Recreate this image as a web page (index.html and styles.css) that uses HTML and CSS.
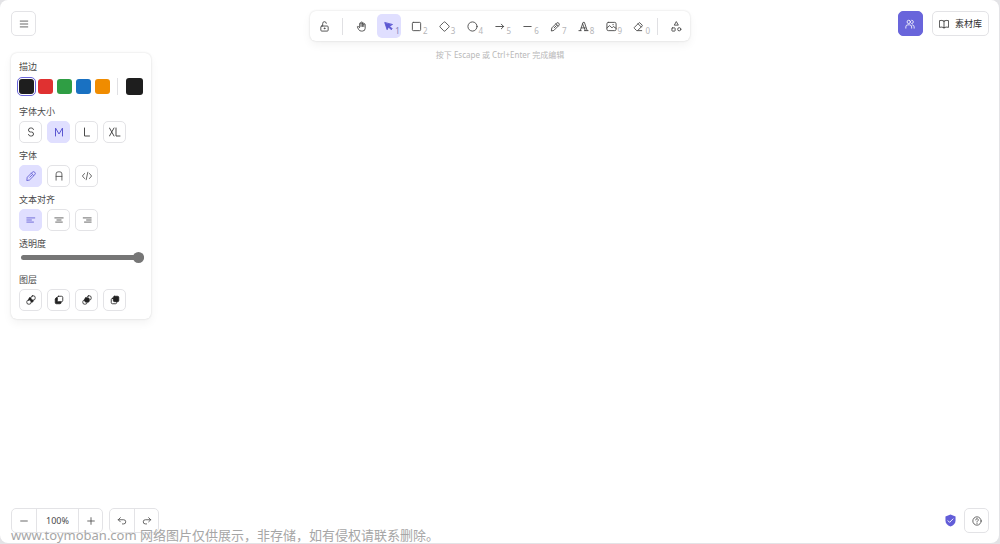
FILE: index.html
```html
<!DOCTYPE html>
<html lang="zh-CN">
<head>
<meta charset="utf-8">
<title>白板</title>
<link rel="stylesheet" href="styles.css">
</head>
<body>
<div class="app">
  <main class="board">
    <div class="side">
      <button class="btn square" aria-label="菜单"><svg class="ic" viewBox="0 0 24 24"><path d="M3 5h18M3 12h18M3 19h18"/></svg></button>
      <section class="panel">
        <h3 class="label">描边</h3>
        <div class="swatches">
          <button class="swatch black chosen" aria-label="黑色"></button>
          <button class="swatch red" aria-label="红色"></button>
          <button class="swatch green" aria-label="绿色"></button>
          <button class="swatch blue" aria-label="蓝色"></button>
          <button class="swatch orange" aria-label="橙色"></button>
          <span class="rule"></span>
          <button class="swatch current black" aria-label="当前颜色"></button>
        </div>
        <h3 class="label">字体大小</h3>
        <div class="options">
          <button class="opt" aria-label="小"><svg class="ic big" viewBox="0 0 24 24"><path d="M17 7a4 4 0 0 0-4-3h-2a4 4 0 0 0 0 8h2a4 4 0 0 1 0 8h-2a4 4 0 0 1-4-3"/></svg></button>
          <button class="opt on" aria-label="中"><svg class="ic big" viewBox="0 0 24 24"><path d="M5 20V4l7 12 7-12v16"/></svg></button>
          <button class="opt" aria-label="大"><svg class="ic big" viewBox="0 0 24 24"><path d="M7 4v16h10"/></svg></button>
          <button class="opt" aria-label="特大"><svg class="ic big" viewBox="0 0 24 24"><path d="M1 4l9 16M10 4L1 20M14 4v16h8"/></svg></button>
        </div>
        <h3 class="label">字体</h3>
        <div class="options">
          <button class="opt on" aria-label="手写"><svg class="ic" viewBox="0 0 24 24"><path d="M2 22l1-7L15 3a4.200 4.200 0 0 1 6 6L9 21zM13 5l5 6M9 15l5-5"/></svg></button>
          <button class="opt" aria-label="普通"><svg class="ic" viewBox="0 0 24 24"><path d="M5 22V7q0-5 5-5h4q5 0 5 5v15M5 13h14"/></svg></button>
          <button class="opt" aria-label="代码"><svg class="ic" viewBox="0 0 24 24"><path d="M6 6l-5 6 5 6M18 6l5 6-5 6M14 3l-4 18"/></svg></button>
        </div>
        <h3 class="label">文本对齐</h3>
        <div class="options">
          <button class="opt on" aria-label="左对齐"><svg class="ic" viewBox="0 0 24 24"><path d="M2 7h19M2 12h11M2 17h16"/></svg></button>
          <button class="opt" aria-label="居中"><svg class="ic" viewBox="0 0 24 24"><path d="M2 7h20M7 12h10M4 17h16"/></svg></button>
          <button class="opt" aria-label="右对齐"><svg class="ic" viewBox="0 0 24 24"><path d="M3 7h19M11 12h11M6 17h16"/></svg></button>
        </div>
        <label class="label" for="opacity">透明度</label>
        <input class="slider" id="opacity" type="range" min="0" max="100" value="100">
        <h3 class="label">图层</h3>
        <div class="options">
          <button class="opt dark" aria-label="置于底层"><svg class="ic" viewBox="0 0 24 24"><rect class="solid" x="7" y="7" width="10" height="10" rx="2"/><rect class="paper" x="12" y="2" width="10" height="10" rx="4"/><rect class="paper" x="2" y="12" width="10" height="10" rx="4"/></svg></button>
          <button class="opt dark" aria-label="下移一层"><svg class="ic" viewBox="0 0 24 24"><rect class="solid" x="3" y="7" width="14" height="14" rx="3"/><rect class="paper" x="8" y="3" width="13" height="13" rx="3"/></svg></button>
          <button class="opt dark" aria-label="上移一层"><svg class="ic" viewBox="0 0 24 24"><rect class="paper" x="12" y="2" width="10" height="10" rx="4"/><rect class="paper" x="2" y="12" width="10" height="10" rx="4"/><rect class="solid" x="7" y="7" width="10" height="10" rx="2"/></svg></button>
          <button class="opt dark" aria-label="置于顶层"><svg class="ic" viewBox="0 0 24 24"><rect class="paper" x="3" y="8" width="13" height="13" rx="3"/><rect class="solid" x="8" y="3" width="13" height="13" rx="3"/></svg></button>
        </div>
      </section>
    </div>

    <div class="middle">
      <div class="toolbar">
        <button class="tool" aria-label="锁定"><svg class="ic tl" viewBox="0 0 24 24"><rect x="4" y="11" width="16" height="11" rx="2"/><path d="M8 11V6a4 4 0 0 1 8-1"/><circle class="solid" cx="12" cy="16" r="1"/></svg></button>
        <span class="rule tall"></span>
        <div class="tools">
          <button class="tool" aria-label="抓手"><svg class="ic tl" viewBox="0 0 24 24"><path d="M8 13V5.500a1.500 1.500 0 0 1 3 0V12M11 5.500v-2a1.500 1.500 0 0 1 3 0V12M14 5.500a1.500 1.500 0 0 1 3 0V12M17 7.500a1.500 1.500 0 0 1 3 0V16a6 6 0 0 1-6 6h-2c-3 0-4.500-1-6-3l-3-5.500c-.6-1.200.8-2.500 2-1.500L8 14.500"/></svg></button>
          <button class="tool on" aria-label="选择"><svg class="ic tl" viewBox="0 0 24 24"><path class="solid" d="M4 4l5 15 3-6 6 6 2-2-6-6 6-3z"/></svg><span class="key">1</span></button>
          <button class="tool" aria-label="矩形"><svg class="ic tl" viewBox="0 0 24 24"><rect x="3" y="3" width="18" height="18" rx="2"/></svg><span class="key">2</span></button>
          <button class="tool" aria-label="菱形"><svg class="ic tl" viewBox="0 0 24 24"><path d="M10.500 2.500q1.500-1.500 3 0l8 8q1.500 1.500 0 3l-8 8q-1.500 1.500-3 0l-8-8q-1.500-1.500 0-3z"/></svg><span class="key">3</span></button>
          <button class="tool" aria-label="椭圆"><svg class="ic tl" viewBox="0 0 24 24"><circle cx="12" cy="12" r="10"/></svg><span class="key">4</span></button>
          <button class="tool" aria-label="箭头"><svg class="ic tl" viewBox="0 0 24 24"><path d="M4 12h17M16 7l5 5-5 5"/></svg><span class="key">5</span></button>
          <button class="tool" aria-label="线条"><svg class="ic tl" viewBox="0 0 24 24"><path d="M4 12h16"/></svg><span class="key">6</span></button>
          <button class="tool" aria-label="自由书写"><svg class="ic tl" viewBox="0 0 24 24"><path d="M3 21l1-6L15 4a3.800 3.800 0 0 1 5 5L9 20zM13 6l5 5M9 15l5-5"/></svg><span class="key">7</span></button>
          <button class="tool" aria-label="文字"><svg class="ic tl" viewBox="0 0 24 24"><path d="M2 21h5M14 21h8M5 21L11 3h3l6 18M7 15h9M10 6l6 15"/></svg><span class="key">8</span></button>
          <button class="tool" aria-label="插入图像"><svg class="ic tl" viewBox="0 0 24 24"><rect x="2" y="3" width="20" height="18" rx="3"/><path d="M2 15l6-5 5 5 3-3 6 4M15 8h1"/></svg><span class="key">9</span></button>
          <button class="tool" aria-label="橡皮"><svg class="ic tl" viewBox="0 0 24 24"><path d="M19 21H8l-5-5q-1-1 0-2L13 4q1-1 2 0l5 5q1 1 0 2L11 20M18 13L11 6"/></svg><span class="key">0</span></button>
        </div>
        <span class="rule tall"></span>
        <button class="tool" aria-label="更多工具"><svg class="ic tl" viewBox="0 0 24 24"><path d="M12 2l4 7H8z"/><rect x="2" y="15" width="7" height="7" rx="1"/><circle cx="18" cy="18" r="3.500"/></svg></button>
      </div>
      <p class="hint">按下 Escape 或 Ctrl+Enter 完成编辑</p>
    </div>

    <div class="right">
      <button class="btn square share" aria-label="协作"><svg class="ic" viewBox="0 0 24 24"><circle cx="9" cy="7" r="4"/><path d="M2 22v-3a5 5 0 0 1 5-5h4a5 5 0 0 1 5 5v3M16 3a4 4 0 0 1 0 8M22 22v-3a5 5 0 0 0-4-5"/></svg></button>
      <button class="btn library"><svg class="ic" viewBox="0 0 24 24"><path d="M12 5v16M12 5Q7 2 1 4v16q6-2 11 1M12 5q5-3 11-1v16q-6-2-11 1"/></svg>素材库</button>
    </div>
  </main>

  <footer class="footer">
    <div class="group">
      <button class="cell" aria-label="缩小"><svg class="ic" viewBox="0 0 24 24"><path d="M4 12h16"/></svg></button>
      <button class="cell zoom">100%</button>
      <button class="cell" aria-label="放大"><svg class="ic" viewBox="0 0 24 24"><path d="M4 12h16M12 4v16"/></svg></button>
    </div>
    <div class="group">
      <button class="cell" aria-label="撤销"><svg class="ic" viewBox="0 0 24 24"><path d="M8 14L3 9l5-5M3 9h13a5 5 0 0 1 0 10h-3"/></svg></button>
      <button class="cell" aria-label="重做"><svg class="ic" viewBox="0 0 24 24"><path d="M16 14l5-5-5-5M21 9H8a5 5 0 0 0 0 10h3"/></svg></button>
    </div>
    <div class="help">
      <a class="shield" href="#" aria-label="端到端加密"><svg viewBox="0 0 24 28"><path class="solid" d="M12 1l11 4v9q0 9-11 13Q1 23 1 14V5z"/><path class="tick" d="M6 14l4 4 8-8"/></svg></a>
      <button class="btn square" aria-label="帮助"><svg class="ic" viewBox="0 0 24 24"><circle cx="12" cy="12" r="10"/><path d="M9 9.500a3 3 0 1 1 4.500 2.500q-1.500 1-1.500 2M12 17v1"/></svg></button>
    </div>
  </footer>
  <p class="watermark">www.toymoban.com 网络图片仅供展示，非存储，如有侵权请联系删除。</p>
</div>
</body>
</html>
```
FILE: styles.css
```css
* { box-sizing: border-box; }
body {
  margin: 0;
  background: #e3e3e6;
  color: #4a4a4a;
  font: 9px/12px "Noto Sans", "Noto Sans CJK SC", sans-serif;
}
button { padding: 0; border: 0; background: none; color: inherit; font: inherit; }
.app {
  position: relative;
  display: flex;
  flex-direction: column;
  justify-content: space-between;
  min-height: calc(100vh - 1px);
  margin: 0 1px 1px 0;
  padding: 11px 10px 10px 11px;
  border-radius: 8px;
  background: #fff;
}
.board { display: grid; grid-template-columns: 1fr auto 1fr; align-items: start; }
.side { display: flex; flex-direction: column; align-items: flex-start; gap: 17px; }

.ic {
  display: block;
  width: 10px;
  height: 10px;
  fill: none;
  stroke: currentColor;
  stroke-width: 2;
  stroke-linecap: round;
  stroke-linejoin: round;
}
.ic.big { width: 12px; height: 12px; }
.ic.tl { width: 11px; height: 11px; }
.solid { fill: currentColor; }
.paper { fill: #fff; }

.btn {
  display: flex;
  align-items: center;
  justify-content: center;
  height: 25px;
  border: 1px solid #e3e3e6;
  border-radius: 5px;
  background: #fff;
}
.square { width: 25px; }
.share { border-color: #6965db; background: #6965db; color: #fff; }
.library { gap: 6px; padding: 0 6px; color: #333; }
.right { display: flex; justify-content: flex-end; gap: 9px; }

.panel {
  width: 140px;
  padding: 8px;
  border-radius: 6px;
  box-shadow: 0 0 2px rgba(0, 0, 0, .16), 0 4px 10px rgba(0, 0, 0, .05);
}
.label { display: block; margin: 0 0 3px; font-size: 9px; font-weight: 400; line-height: 12px; }
.swatches { display: flex; align-items: center; gap: 4px; margin: 5px 0 11px; }
.swatch { width: 15px; height: 15px; border-radius: 3px; }
.chosen { outline: 1px solid #6965db; outline-offset: 1px; box-shadow: 0 0 0 1px #fff; }
.current { width: 17px; height: 17px; margin-left: 4px; }
.black { background: #1e1e1e; }
.red { background: #e03131; }
.green { background: #2f9e44; }
.blue { background: #1971c2; }
.orange { background: #f08c00; }
.rule { width: 1px; height: 17px; margin-left: 3px; background: #e0e0e3; }
.rule.tall { margin: 0; }

.options { display: flex; gap: 5px; margin-bottom: 7px; }
.options:last-child { margin-bottom: 0; }
.opt {
  display: flex;
  align-items: center;
  justify-content: center;
  width: 23px;
  height: 22px;
  border: 1px solid #e3e3e6;
  border-radius: 5px;
}
.dark { color: #222; }
.on, .opt.on { border-color: #e0dfff; background: #e0dfff; color: #5b57d1; }

.slider {
  display: block;
  appearance: none;
  width: calc(100% - 1px);
  height: 9px;
  margin: 0 0 12px 2px;
  background: none;
}
.slider::-webkit-slider-runnable-track { height: 5px; border-radius: 3px; background: #767676; }
.slider::-webkit-slider-thumb {
  appearance: none;
  width: 11px;
  height: 11px;
  margin-top: -3px;
  border-radius: 50%;
  background: #767676;
}

.middle { width: 380px; }
.toolbar {
  display: flex;
  align-items: center;
  gap: 6px;
  padding: 3px 2px;
  border-radius: 6px;
  box-shadow: 0 0 2px rgba(0, 0, 0, .16), 0 4px 10px rgba(0, 0, 0, .05);
}
.tools { display: flex; flex: 1; justify-content: space-between; }
.tool {
  position: relative;
  display: flex;
  flex: none;
  align-items: center;
  justify-content: center;
  width: 24px;
  height: 24px;
  border-radius: 5px;
}
.key { position: absolute; right: 1px; bottom: 2px; color: #b5b5b8; font-size: 8px; line-height: 10px; }
.on .key { color: #8582b8; }
.hint { margin: 8px 0 0; color: #b8b8b8; font-size: 8px; text-align: center; }

.footer { display: flex; gap: 6px; }
.group { display: flex; height: 25px; border: 1px solid #e3e3e6; border-radius: 5px; }
.cell { display: flex; align-items: center; justify-content: center; width: 24px; }
.cell + .cell { border-left: 1px solid #e3e3e6; }
.cell.zoom { width: 42px; }
.help { display: flex; align-items: center; gap: 8px; margin-left: auto; }
.shield { display: block; width: 11px; height: 13px; color: #625dd8; }
.shield svg { display: block; width: 11px; height: 13px; }
.tick { fill: none; stroke: #fff; stroke-width: 2; }
.watermark {
  position: absolute;
  left: 11px;
  bottom: 0;
  margin: 0;
  color: #a6a6a6;
  font-size: 13px;
  line-height: 16px;
  pointer-events: none;
}
```
